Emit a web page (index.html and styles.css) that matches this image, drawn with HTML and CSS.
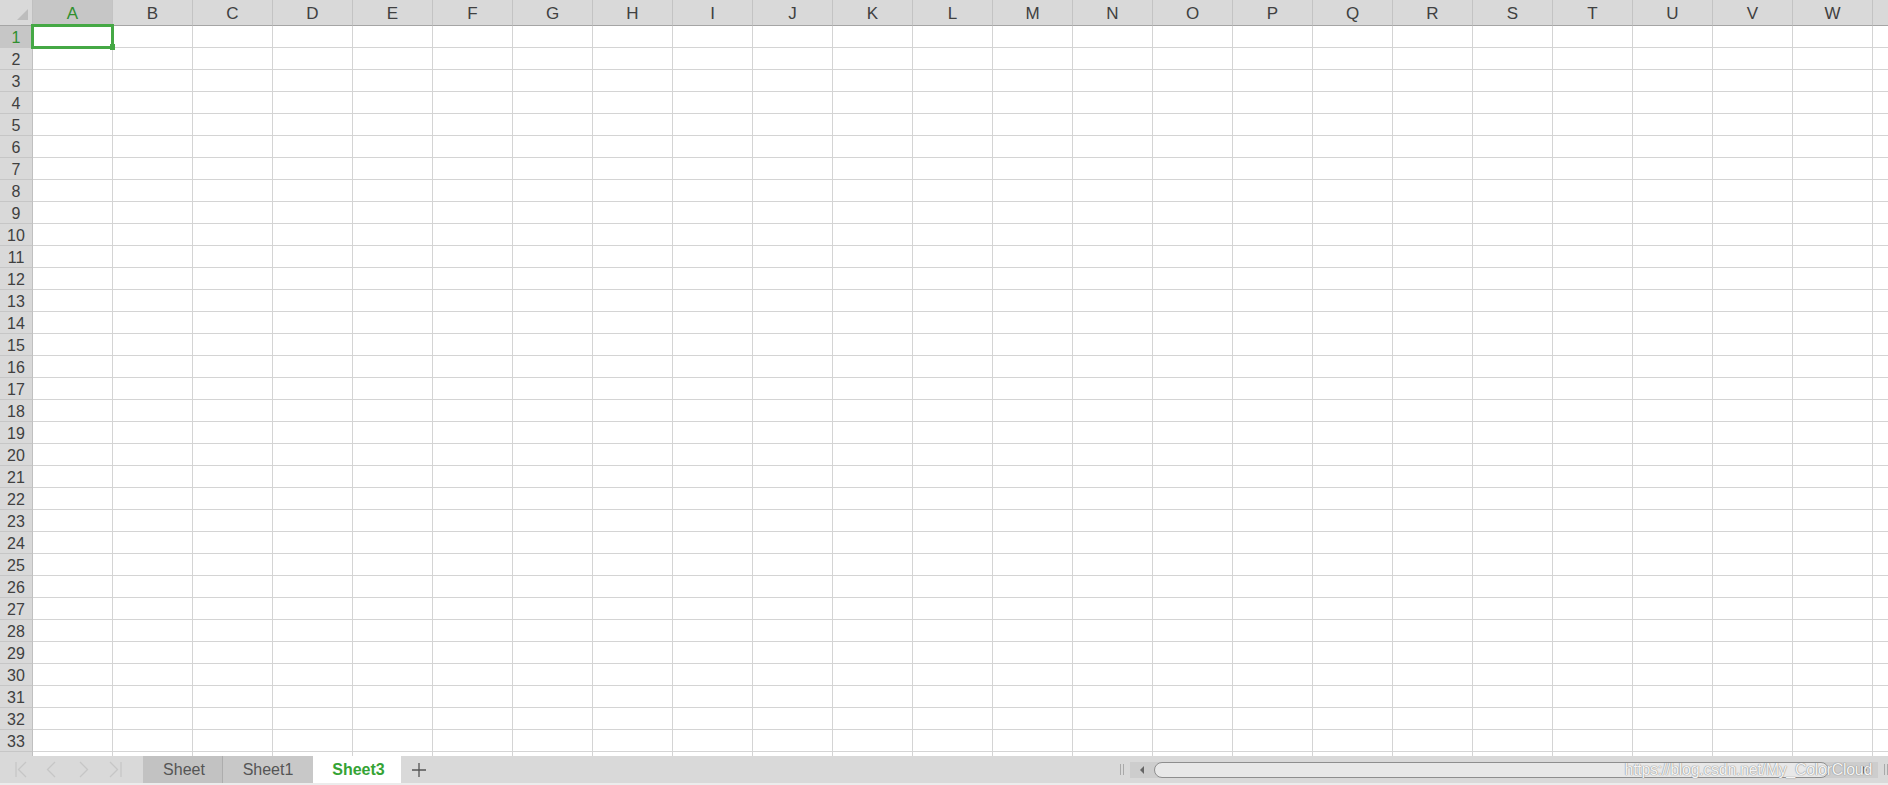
FILE: index.html
```html
<!DOCTYPE html>
<html>
<head>
<meta charset="utf-8">
<link rel="stylesheet" href="styles.css">
</head>
<body>
<div class="sheet">
  <div class="colheads">
    <div class="corner"><span class="tri"></span></div>
    <div class="ch sel">A</div><div class="ch">B</div><div class="ch">C</div><div class="ch">D</div>
    <div class="ch">E</div><div class="ch">F</div><div class="ch">G</div><div class="ch">H</div>
    <div class="ch">I</div><div class="ch">J</div><div class="ch">K</div><div class="ch">L</div>
    <div class="ch">M</div><div class="ch">N</div><div class="ch">O</div><div class="ch">P</div>
    <div class="ch">Q</div><div class="ch">R</div><div class="ch">S</div><div class="ch">T</div>
    <div class="ch">U</div><div class="ch">V</div><div class="ch">W</div><div class="ch"></div>
  </div>
  <div class="body">
    <div class="rowheads">
      <div class="rh sel">1</div><div class="rh">2</div><div class="rh">3</div><div class="rh">4</div>
      <div class="rh">5</div><div class="rh">6</div><div class="rh">7</div><div class="rh">8</div>
      <div class="rh">9</div><div class="rh">10</div><div class="rh">11</div><div class="rh">12</div>
      <div class="rh">13</div><div class="rh">14</div><div class="rh">15</div><div class="rh">16</div>
      <div class="rh">17</div><div class="rh">18</div><div class="rh">19</div><div class="rh">20</div>
      <div class="rh">21</div><div class="rh">22</div><div class="rh">23</div><div class="rh">24</div>
      <div class="rh">25</div><div class="rh">26</div><div class="rh">27</div><div class="rh">28</div>
      <div class="rh">29</div><div class="rh">30</div><div class="rh">31</div><div class="rh">32</div>
      <div class="rh">33</div><div class="rh"></div>
    </div>
    <div class="cells"></div>
  </div>
  <div class="selection"></div>
  <div class="handle"></div>
</div>
<div class="tabbar">
  <div class="nav">
    <svg width="143" height="27" viewBox="0 0 143 27">
      <g fill="none" stroke="#c6c6c6" stroke-width="1.3">
        <path d="M16 6 V21"/>
        <path d="M26 6 L18.5 13.5 L26 21"/>
        <path d="M55 6 L47.5 13.5 L55 21"/>
        <path d="M80 6 L87.5 13.5 L80 21"/>
        <path d="M110 6 L117.5 13.5 L110 21"/>
        <path d="M121 6 V21"/>
      </g>
    </svg>
  </div>
  <div class="tab t0">Sheet</div>
  <div class="tab t1">Sheet1</div>
  <div class="tab active">Sheet3</div>
  <div class="plus">
    <svg width="16" height="16" viewBox="0 0 16 16"><path d="M8 1 V15 M1 8 H15" stroke="#555" stroke-width="1.3" fill="none"/></svg>
  </div>
  <div class="spacer"></div>
  <div class="scroll">
    <span class="grip"></span>
    <div class="track">
      <div class="btn"><span class="arr-l"></span></div>
      <div class="thumb"></div>
      <div class="btn right"><span class="arr-r"></span></div>
    </div>
    <span class="grip"></span>
  </div>
  <div class="watermark">https://blog.csdn.net/My_ColorCloud</div>
</div>
<div class="bottomstrip"></div>
</body>
</html>
```
FILE: styles.css
```css
html, body {
  margin: 0;
  padding: 0;
  background: #ffffff;
  font-family: "Liberation Sans", Arial, sans-serif;
  overflow: hidden;
}

.sheet {
  position: relative;
  height: 756px;
  overflow: hidden;
}

.colheads {
  display: flex;
  height: 26px;
  width: max-content;
}

.corner {
  position: relative;
  flex: none;
  width: 33px;
  height: 26px;
  box-sizing: border-box;
  background: #d9d9d9;
  border-right: 1px solid #c0c0c0;
  border-bottom: 1px solid #a5a5a5;
}

.tri {
  position: absolute;
  left: 17px;
  top: 9px;
  width: 0;
  height: 0;
  border-left: 11px solid transparent;
  border-bottom: 11px solid #bdbdbd;
}

.ch {
  flex: none;
  width: 80px;
  height: 26px;
  box-sizing: border-box;
  background: #d9d9d9;
  border-right: 1px solid #c3c3c3;
  border-bottom: 1px solid #a5a5a5;
  color: #404040;
  font-size: 17px;
  line-height: 28px;
  text-align: center;
}

.ch.sel {
  background: #c6c6c6;
  color: #2f8f2f;
}

.body {
  display: flex;
}

.rowheads {
  flex: none;
  width: 33px;
}

.rh {
  height: 22px;
  box-sizing: border-box;
  background: #d9d9d9;
  border-right: 1px solid #c0c0c0;
  border-bottom: 1px solid #c6c6c6;
  color: #404040;
  font-size: 16px;
  line-height: 23px;
  text-align: center;
}

.rh.sel {
  background: #c6c6c6;
  color: #2f8f2f;
}

.cells {
  flex: 1;
  height: 770px;
  background-image:
    linear-gradient(to right, transparent 79px, #d4d4d4 79px),
    linear-gradient(to bottom, transparent 21px, #d4d4d4 21px);
  background-size: 80px 100%, 100% 22px;
}

.selection {
  position: absolute;
  left: 31px;
  top: 24px;
  width: 83px;
  height: 25px;
  box-sizing: border-box;
  border: 3px solid #45a845;
}

.handle {
  position: absolute;
  left: 110px;
  top: 44px;
  width: 5px;
  height: 6px;
  background: #45a845;
}

.tabbar {
  position: relative;
  display: flex;
  align-items: stretch;
  height: 27px;
  background: #d9d9d9;
}

.nav {
  flex: none;
  width: 143px;
  height: 27px;
}

.nav svg {
  display: block;
}

.tab {
  flex: none;
  box-sizing: border-box;
  font-size: 16px;
  line-height: 28px;
  text-align: center;
  color: #555555;
}

.tab.t0 {
  width: 80px;
  background: #c2c2c2;
  border-right: 1px solid #adadad;
  padding-left: 3px;
}

.tab.t1 {
  width: 90px;
  background: #c8c8c8;
}

.tab.active {
  width: 88px;
  background: #ffffff;
  color: #35a335;
  font-weight: bold;
  padding-left: 3px;
}

.plus {
  flex: none;
  width: 36px;
  display: flex;
  align-items: center;
  justify-content: center;
  padding-top: 1px;
}

.plus svg {
  display: block;
}

.spacer {
  flex: 1;
}

.scroll {
  flex: none;
  display: flex;
  align-items: center;
  width: 768px;
  gap: 6px;
  padding-left: 2px;
}

.grip {
  flex: none;
  width: 4px;
  height: 11px;
  border-left: 1px solid #a9a9a9;
  border-right: 1px solid #a9a9a9;
  box-sizing: border-box;
}

.track {
  flex: 1;
  display: flex;
  align-items: stretch;
  height: 16px;
  background: #cdcdcd;
}

.btn {
  flex: none;
  width: 24px;
  display: flex;
  align-items: center;
  justify-content: center;
}

.btn.right {
  width: 47px;
  justify-content: flex-end;
  padding-right: 9px;
  box-sizing: border-box;
}

.arr-l {
  width: 0;
  height: 0;
  border-top: 4px solid transparent;
  border-bottom: 4px solid transparent;
  border-right: 4px solid #666666;
}

.arr-r {
  width: 0;
  height: 0;
  border-top: 4px solid transparent;
  border-bottom: 4px solid transparent;
  border-left: 4px solid #666666;
}

.thumb {
  flex: none;
  width: 675px;
  box-sizing: border-box;
  background: #e8e8e8;
  border: 1px solid #8e8e8e;
  border-radius: 8px;
}

.watermark {
  position: absolute;
  right: 16px;
  top: 4px;
  font-size: 16px;
  line-height: 20px;
  color: rgba(255, 255, 255, 0.92);
  text-shadow: 0 0 1px #8a8a8a, 0 0 1px #8a8a8a;
  letter-spacing: -0.3px;
}

.bottomstrip {
  height: 2px;
  background: #ececec;
}
```
